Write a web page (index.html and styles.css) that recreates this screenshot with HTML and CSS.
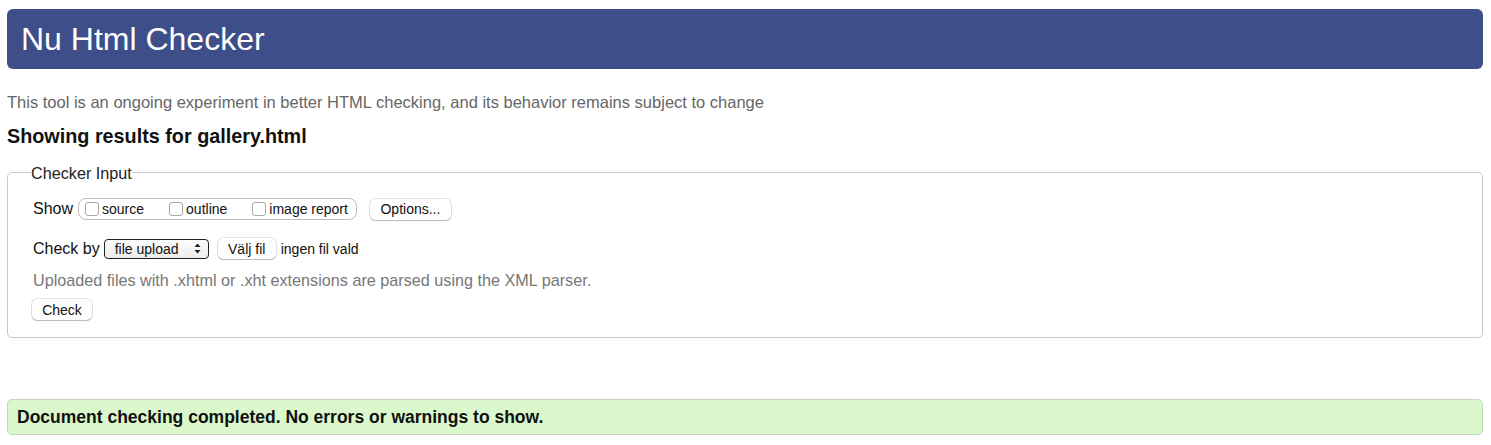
FILE: index.html
```html
<!DOCTYPE html>
<html lang="en">
<head>
<meta charset="utf-8">
<title>Nu Html Checker</title>
<link rel="stylesheet" href="styles.css">
</head>
<body>
<header class="banner"><h1 class="title">Nu Html Checker</h1></header>
<p class="intro">This tool is an ongoing experiment in better HTML checking, and its behavior remains subject to change</p>
<h2 class="results">Showing results for gallery.html</h2>
<fieldset class="input">
  <legend class="legend">Checker Input</legend>
  <div class="row show-row">
    <span class="label">Show</span>
    <div class="show-group">
      <label class="opt"><span class="box"></span>source</label>
      <label class="opt"><span class="box"></span>outline</label>
      <label class="opt"><span class="box"></span>image report</label>
    </div>
    <span class="btn options">Options...</span>
  </div>
  <div class="row check-row">
    <span class="label">Check by</span>
    <span class="select">file upload
      <svg class="arrows" width="7" height="11" viewBox="0 0 7 11"><path d="M3.5 0.5 L6.5 4 L0.5 4 Z M3.5 10.5 L6.5 7 L0.5 7 Z" fill="#222"/></svg>
    </span>
    <span class="btn file">Välj fil</span>
    <span class="small">ingen fil vald</span>
  </div>
  <p class="hint">Uploaded files with .xhtml or .xht extensions are parsed using the XML parser.</p>
  <span class="btn check">Check</span>
</fieldset>
<div class="success">Document checking completed. No errors or warnings to show.</div>
</body>
</html>
```
FILE: styles.css
```css
html, body { background: #fff; }
body {
  margin: 0 8px 0 7px;
  padding-top: 9px;
  font-family: "Liberation Sans", Arial, Helvetica, sans-serif;
  color: #111;
}
.banner {
  background: #3d4e88;
  border-radius: 6px;
  height: 60px;
  display: flex;
  align-items: center;
  padding-left: 14px;
}
.title {
  margin: 0;
  color: #fff;
  font-weight: normal;
  font-size: 32px;
  line-height: 1;
}
.intro {
  margin: 23px 0 0;
  color: #666;
  font-size: 16.5px;
  line-height: 20px;
}
.results {
  margin: 13px 0 0;
  font-size: 19.8px;
  line-height: 23px;
  font-weight: bold;
  color: #111;
}
.input {
  margin: 15px 0 0;
  border: 1px solid #c8c8c8;
  border-radius: 5px;
  padding: 17px 25px 17px 25px;
  min-width: 0;
}
.legend {
  padding: 0;
  margin-left: -2px;
  font-size: 16.2px;
  line-height: 18px;
  color: #222;
  transform: translateY(1px);
}
.row { display: flex; align-items: center; }
.label { font-size: 16px; color: #111; }
.show-group {
  display: flex;
  align-items: center;
  margin-left: 5px;
  height: 20px;
  border: 1px solid #bdbdbd;
  border-radius: 8px;
  padding: 0 8px 0 6px;
  gap: 25px;
}
.opt { display: flex; align-items: center; font-size: 14px; color: #111; }
.box {
  width: 12px; height: 12px;
  border: 1px solid #a9a9a9;
  border-radius: 3px;
  background: #fff;
  margin-right: 3px;
}
.btn {
  display: inline-flex;
  align-items: center;
  justify-content: center;
  box-sizing: border-box;
  height: 21px;
  font-size: 14px;
  color: #111;
  background: #fff;
  border-radius: 5px;
  box-shadow: 0 0 0 0.5px rgba(0,0,0,0.22), 0 1px 1px rgba(0,0,0,0.18);
}
.options { margin-left: 13px; width: 81px; }
.check-row { margin-top: 18px; }
.select {
  display: inline-flex;
  align-items: center;
  justify-content: space-between;
  margin-left: 4px;
  box-sizing: border-box;
  width: 105px;
  height: 20px;
  padding: 0 7px 0 10px;
  border: 1px solid #222;
  border-radius: 4px;
  background: linear-gradient(#fdfdfd, #ececec);
  font-size: 14px;
  color: #111;
}
.file { margin-left: 9px; width: 58px; }
.small { font-size: 14px; margin-left: 5px; color: #111; }
.hint {
  margin: 11px 0 0;
  font-size: 16.2px;
  line-height: 20px;
  color: #777;
}
.check { margin-top: 9px; margin-left: -1px; width: 60px; }
.success {
  margin-top: 61px;
  box-sizing: border-box;
  background: #dbf8cc;
  border: 1px solid #c4d6bb;
  border-radius: 5px;
  height: 36px;
  display: flex;
  align-items: center;
  padding-left: 9px;
  font-size: 17.5px;
  font-weight: bold;
  color: #111;
}
```
